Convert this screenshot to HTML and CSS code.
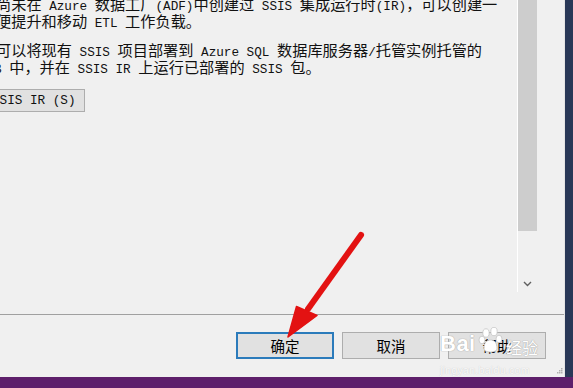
FILE: index.html
```html
<!DOCTYPE html>
<html lang="zh-CN">
<head>
    <meta charset="UTF-8">
    <title>集成运行时设置</title>
    <link rel="stylesheet" href="styles.css">
</head>
<body>
    <div class="screen">
        <div class="desk">
            <div class="dialog">
                <div class="body">
                    <div class="viewer">
                        <div class="pane">
                            <div class="text">
                                <p class="para">
                                    <span class="ln">尚未在<span class="m"> Azure </span>数据工厂<span class="m">(ADF)</span>中创建过<span class="m"> SSIS </span>集成运行时<span class="m">(IR)</span>，可以创建一</span>
                                    <span class="ln">便提升和移动<span class="m"> ETL </span>工作负载。</span>
                                </p>
                                <p class="para">
                                    <span class="ln">可以将现有<span class="m"> SSIS </span>项目部署到<span class="m"> Azure SQL </span>数据库服务器<span class="m">/</span>托管实例托管的</span>
                                    <span class="ln ln-shift"><span class="m">B </span>中，并在<span class="m"> SSIS IR </span>上运行已部署的<span class="m"> SSIS </span>包。</span>
                                </p>
                                <button class="cmd"><span class="m">SSIS IR (S)</span></button>
                            </div>
                        </div>
                        <div class="scroll">
                            <div class="thumb"></div>
                            <div class="track"></div>
                            <div class="arrow-btn">
                                <svg width="9" height="6" viewBox="0 0 9 6">
                                    <path d="M1 1 L4.5 4.5 L8 1" fill="none" stroke="#606060" stroke-width="1.4"/>
                                </svg>
                            </div>
                        </div>
                    </div>
                </div>
                <div class="footer">
                    <button class="btn btn-default">确定</button>
                    <button class="btn">取消</button>
                    <button class="btn">帮助</button>

                    <div class="watermark">
                        <span class="wm-bai">Bai</span>
                        <svg class="wm-paw" width="30" height="27" viewBox="0 0 30 27">
                            <ellipse cx="8" cy="6" rx="3.2" ry="4.2" fill="#fff" stroke="#c4c4c4" stroke-width="0.8"/>
                            <ellipse cx="16" cy="4.5" rx="3.2" ry="4.2" fill="#fff" stroke="#c4c4c4" stroke-width="0.8"/>
                            <ellipse cx="4" cy="13" rx="3" ry="3.8" fill="#fff" stroke="#c4c4c4" stroke-width="0.8"/>
                            <ellipse cx="21" cy="12" rx="3" ry="3.8" fill="#fff" stroke="#c4c4c4" stroke-width="0.8"/>
                            <path d="M6 22 C6 15 9 13 12.5 13 C16 13 19 15 19 22 C19 26 6 26 6 22 Z" fill="#fff" stroke="#c4c4c4" stroke-width="0.8"/>
                        </svg>
                        <span class="wm-jy">经验</span>
                        <span class="wm-url">jingyan.baidu.com</span>
                    </div>
                    <svg class="grip" width="6" height="6" viewBox="0 0 6 6">
                        <rect x="4" y="0" width="1.5" height="1.5" fill="#b0b0b0"/>
                        <rect x="2" y="2" width="1.5" height="1.5" fill="#b0b0b0"/>
                        <rect x="4" y="2" width="1.5" height="1.5" fill="#b0b0b0"/>
                        <rect x="0" y="4" width="1.5" height="1.5" fill="#b0b0b0"/>
                        <rect x="2" y="4" width="1.5" height="1.5" fill="#b0b0b0"/>
                        <rect x="4" y="4" width="1.5" height="1.5" fill="#b0b0b0"/>
                    </svg>
                </div>
            </div>
        </div>
        <div class="status"></div>

        <svg class="pointer" width="573" height="388" viewBox="0 0 573 388">
            <line x1="361" y1="235" x2="308" y2="309" stroke="#e31212" stroke-width="6" stroke-linecap="round"/>
            <polygon points="296.5,306.5 317,315.5 288,337" fill="#e31212" stroke="#e31212" stroke-width="1.5" stroke-linejoin="round"/>
        </svg>
    </div>
</body>
</html>
```

FILE: styles.css
```css
html, body {
    margin: 0;
    padding: 0;
}
body {
    width: 573px;
    height: 388px;
    overflow: hidden;
    background: #293857;
    font-family: "Noto Sans CJK SC", sans-serif;
}
.screen {
    position: relative;
    width: 573px;
    height: 388px;
    display: flex;
    flex-direction: column;
}
.desk {
    height: 377px;
    display: flex;
    background: #293857;
}
.dialog {
    width: 565px;
    height: 377px;
    background: #f0f0f0;
    display: flex;
    flex-direction: column;
    border-right: 1px solid #e4e4e4;
    box-sizing: border-box;
}
.body {
    height: 315px;
    border-bottom: 1px solid #a0a0a0;
    box-sizing: border-box;
}
.viewer {
    height: 292px;
    display: flex;
}
.pane {
    width: 517px;
    height: 292px;
    overflow: hidden;
    border-right: 1px solid #ffffff;
}
.text {
    margin: -5px 0 0 -4px;
    font-family: "Noto Sans CJK SC", sans-serif;
    font-size: 15.2px;
    line-height: 17px;
    color: #111;
    white-space: nowrap;
}
.para {
    margin: 0;
}
.para + .para {
    margin-top: 12px;
}
.ln {
    display: block;
    height: 17px;
}
.ln-shift {
    margin-left: -2px;
}
.m {
    font-family: "Liberation Mono", monospace;
    font-size: 12.67px;
    white-space: pre;
}
.cmd {
    display: block;
    margin: 14px 0 0 -13px;
    height: 23px;
    padding: 0 8px;
    background: #e1e1e1;
    border: 1px solid #adadad;
    color: #111;
    line-height: 20px;
    box-sizing: border-box;
}
.scroll {
    width: 19px;
    height: 292px;
    display: flex;
    flex-direction: column;
    background: #f0f0f0;
}
.thumb {
    height: 231px;
    background: #cdcdcd;
}
.track {
    flex: 1;
}
.arrow-btn {
    height: 18px;
    display: flex;
    align-items: center;
    justify-content: center;
    padding-top: 2px;
    box-sizing: border-box;
}
.footer {
    position: relative;
    flex: 1;
    display: flex;
    justify-content: flex-end;
    align-items: flex-start;
    gap: 8px;
    padding: 17px 18px 0 0;
}
.btn {
    width: 98px;
    height: 27px;
    background: #e1e1e1;
    border: 1px solid #adadad;
    box-sizing: border-box;
    font-family: "Noto Sans CJK SC", sans-serif;
    font-size: 14.5px;
    line-height: 22px;
    color: #000;
    padding: 0;
}
.btn-default {
    border: 2px solid #2b7bbb;
}
.watermark {
    position: absolute;
    left: 440px;
    top: 10px;
    width: 110px;
    height: 50px;
    color: #fff;
    pointer-events: none;
}
.wm-bai {
    position: absolute;
    left: 0;
    top: 6px;
    font-family: "Liberation Sans", Arial, sans-serif;
    font-weight: bold;
    font-size: 22px;
    letter-spacing: 0.5px;
    text-shadow: 0 0 1px #a8a8a8, 0 0 1px #a8a8a8;
}
.wm-paw {
    position: absolute;
    left: 38px;
    top: 2px;
}
.wm-jy {
    position: absolute;
    left: 66px;
    top: 11px;
    font-size: 16px;
    line-height: 22px;
    text-shadow: 0 0 1px #a8a8a8, 0 0 1px #a8a8a8;
}
.wm-url {
    position: absolute;
    left: 0;
    top: 39px;
    font-family: "Liberation Sans", Arial, sans-serif;
    font-size: 10.5px;
    line-height: 12px;
    letter-spacing: 0.3px;
    color: #fafafa;
    text-shadow: 0 0 1px #bdbdbd;
}
.grip {
    position: absolute;
    right: 1px;
    bottom: 3px;
}
.status {
    height: 11px;
    background: #5e1f6b;
}
.pointer {
    position: absolute;
    left: 0;
    top: 0;
    pointer-events: none;
}
```
